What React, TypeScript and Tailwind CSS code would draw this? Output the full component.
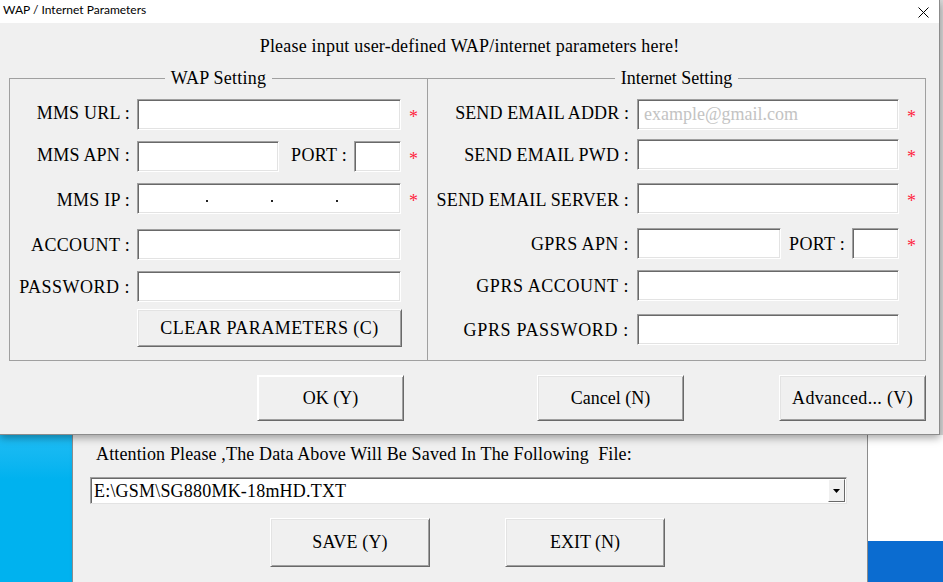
import React from 'react'

const edit =
  'block h-[31px] bg-white border border-t-[#a0a0a0] border-l-[#a0a0a0] border-b-white border-r-white shadow-[inset_1px_1px_0_#696969,inset_-1px_-1px_0_#e3e3e3] outline-none px-[6px] text-[18px] text-black placeholder:text-[#c3c3c3]'

const btn =
  'flex items-center justify-center bg-[#f0f0f0] border border-t-white border-l-white border-b-[#696969] border-r-[#696969] shadow-[inset_1px_1px_0_#e3e3e3,inset_-1px_-1px_0_#a0a0a0] text-[18px] text-black'

function Star(): JSX.Element {
  return (
    <span className="ml-[8px] text-[18px] leading-none text-[#ff1f3d] translate-y-[2px]">
      *
    </span>
  )
}

interface RowProps {
  label: string
  labelWidth: string
  gap: string
  tracking?: string
  // nudges the label text up or down against its input
  shift?: string
  className?: string
  children: React.ReactNode
}

function Row({ label, labelWidth, gap, tracking, shift, className, children }: RowProps): JSX.Element {
  return (
    <div className={`flex items-center h-[31px] ${className ?? ''}`}>
      <span
        className={`${labelWidth} ${tracking ?? ''} ${shift ?? 'mt-[1px]'} text-right text-[18px] leading-[22px] whitespace-nowrap`}
      >
        {label}
      </span>
      <div className={`flex items-center ${gap}`}>{children}</div>
    </div>
  )
}

function PortLabel({ width, shift }: { width: string; shift: string }): JSX.Element {
  return (
    <span className={`${width} ${shift} pr-[7px] text-right text-[18px] leading-[22px] tracking-[0.3px]`}>
      PORT :
    </span>
  )
}

function IpField(): JSX.Element {
  return (
    <div className={`${edit} w-[264px] flex items-start pl-[1px] pt-[16px]`}>
      <span className="ml-[67px] w-[2px] h-[2px] bg-[#222]" />
      <span className="ml-[63px] w-[2px] h-[2px] bg-[#222]" />
      <span className="ml-[63px] w-[2px] h-[2px] bg-[#222]" />
    </div>
  )
}

function WapGroup(): JSX.Element {
  const lw = 'w-[120px]'
  const g = 'ml-[7px]'
  return (
    <fieldset className="w-[419px] min-w-0 border border-[#a0a0a0] pt-[10px] pb-[13px]">
      <legend className="mx-auto px-[6px] text-[18px] leading-[22px] tracking-[0.25px]">
        WAP Setting
      </legend>
      <Row label="MMS URL :" labelWidth={lw} gap={g} tracking="tracking-[0.22px]" shift="mb-[3px]">
        <input className={`${edit} w-[264px]`} readOnly />
        <Star />
      </Row>
      <Row label="MMS APN :" labelWidth={lw} gap={g} tracking="tracking-[0.22px]" shift="mb-[3px]" className="mt-[11px]">
        <input className={`${edit} w-[142px]`} readOnly />
        <PortLabel width="w-[75px]" shift="mb-[3px]" />
        <input className={`${edit} w-[47px]`} readOnly />
        <Star />
      </Row>
      <Row label="MMS IP :" labelWidth={lw} gap={g} tracking="tracking-[0.25px]" shift="mt-[3px]" className="mt-[11px]">
        <IpField />
        <Star />
      </Row>
      <Row label="ACCOUNT :" labelWidth={lw} gap={g} tracking="tracking-[0.3px]" className="mt-[15px]">
        <input className={`${edit} w-[264px]`} readOnly />
      </Row>
      <Row label="PASSWORD :" labelWidth={lw} gap={g} tracking="tracking-[0.5px]" className="mt-[11px]">
        <input className={`${edit} w-[264px]`} readOnly />
      </Row>
      <div className="flex mt-[7px] pl-[127px]">
        <button className={`${btn} w-[265px] h-[38px] tracking-[0.45px]`}>CLEAR PARAMETERS (C)</button>
      </div>
    </fieldset>
  )
}

function InternetGroup(): JSX.Element {
  const lw = 'w-[201px]'
  const g = 'ml-[8px]'
  return (
    <fieldset className="-ml-px w-[499px] min-w-0 border border-[#a0a0a0] pt-[10px] pb-[13px]">
      <legend className="mx-auto px-[6px] text-[18px] leading-[22px]">Internet Setting</legend>
      <Row label="SEND EMAIL ADDR :" labelWidth={lw} gap={g} tracking="tracking-[0.12px]" shift="mb-[3px]">
        <input className={`${edit} w-[262px]`} placeholder="example@gmail.com" readOnly />
        <Star />
      </Row>
      <Row label="SEND EMAIL PWD :" labelWidth={lw} gap={g} tracking="tracking-[0.19px]" className="mt-[9px]">
        <input className={`${edit} w-[262px]`} readOnly />
        <Star />
      </Row>
      <Row label="SEND EMAIL SERVER :" labelWidth={lw} gap={g} tracking="tracking-[0.16px]" shift="mt-[3px]" className="mt-[13px]">
        <input className={`${edit} w-[262px]`} readOnly />
        <Star />
      </Row>
      <Row label="GPRS APN :" labelWidth={lw} gap={g} tracking="tracking-[0.4px]" className="mt-[14px]">
        <input className={`${edit} w-[144px]`} readOnly />
        <PortLabel width="w-[71px]" shift="mt-[1px]" />
        <input className={`${edit} w-[47px]`} readOnly />
        <Star />
      </Row>
      <Row label="GPRS ACCOUNT :" labelWidth={lw} gap={g} tracking="tracking-[0.57px]" className="mt-[11px]">
        <input className={`${edit} w-[262px]`} readOnly />
      </Row>
      <Row label="GPRS PASSWORD :" labelWidth={lw} gap={g} tracking="tracking-[0.67px]" className="mt-[13px]">
        <input className={`${edit} w-[262px]`} readOnly />
      </Row>
    </fieldset>
  )
}

function Dialog(): JSX.Element {
  return (
    <div className="relative z-10 w-[940px] h-[435px] flex flex-col border-r border-b border-[#8c8c8c] bg-[#f0f0f0] shadow-[0_3px_8px_rgba(0,0,0,0.35)]">
      <div className="h-[23px] bg-white flex items-center justify-between pl-[3px] pr-[10px]">
        <span className="mb-[3px] font-['Lato',sans-serif] text-[12px] leading-none">
          WAP / Internet Parameters
        </span>
        <svg width="11" height="11" viewBox="0 0 11 11" className="mt-[1px]">
          <path d="M0.5 0.5L10.5 10.5M10.5 0.5L0.5 10.5" stroke="#000" strokeWidth="1" />
        </svg>
      </div>
      <div className="mt-[12px] h-[22px] leading-[22px] text-center text-[18px] tracking-[0.2px]">
        Please input user-defined WAP/internet parameters here!
      </div>
      <div className="mt-[10px] pl-[9px] flex items-stretch">
        <WapGroup />
        <InternetGroup />
      </div>
      <div className="mt-[14px] flex">
        <button className={`${btn} ml-[257px] w-[147px] h-[46px] border-[#646464] shadow-[inset_1px_1px_0_#fff,inset_-1px_-1px_0_#a0a0a0]`}>
          OK (Y)
        </button>
        <button className={`${btn} ml-[133px] w-[147px] h-[46px]`}>Cancel (N)</button>
        <button className={`${btn} ml-[95px] w-[147px] h-[46px] tracking-[0.33px]`}>Advanced... (V)</button>
      </div>
    </div>
  )
}

function SaveWindow(): JSX.Element {
  return (
    <div className="w-[796px] bg-[#f0f0f0] border-l border-r border-[#8c8c8c] flex flex-col shadow-[3px_0_6px_rgba(0,0,0,0.18)]">
      <div className="mt-[8px] pl-[23px] text-[18px] leading-[22px] whitespace-pre tracking-[0.14px]">
        Attention Please ,The Data Above Will Be Saved In The Following  File:
      </div>
      <div className="mt-[12px] ml-[17px] w-[757px] h-[27px] flex items-center bg-white border border-t-[#a0a0a0] border-l-[#a0a0a0] border-b-[#e3e3e3] border-r-[#e3e3e3] shadow-[inset_1px_1px_0_#696969]">
        <span className="flex-1 pl-[3px] text-[18px] leading-[22px] tracking-[0.2px]">
          E:\GSM\SG880MK-18mHD.TXT
        </span>
        <div className="mr-[1px] w-[17px] h-[23px] flex items-center justify-center bg-[#f0f0f0] border border-t-white border-l-white border-b-[#696969] border-r-[#696969]">
          <svg width="7" height="4" viewBox="0 0 7 4">
            <path d="M0 0H7L3.5 4Z" fill="#000" />
          </svg>
        </div>
      </div>
      <div className="mt-[14px] flex">
        <button className={`${btn} ml-[197px] w-[160px] h-[49px] tracking-[0.15px]`}>SAVE (Y)</button>
        <button className={`${btn} ml-[75px] w-[160px] h-[49px]`}>EXIT (N)</button>
      </div>
    </div>
  )
}

export default function App(): JSX.Element {
  return (
    <div className="relative w-[943px] h-[582px] overflow-hidden flex flex-col font-['Liberation_Serif',serif] text-black">
      <div className="flex h-[435px]">
        <Dialog />
        <div className="flex-1 bg-[#d9d9d9]" />
      </div>
      <div className="flex flex-1">
        <div className="w-[72px] bg-gradient-to-b from-[#1dbcf4] to-[#00b2ef] to-[30%]" />
        <SaveWindow />
        <div className="flex-1 flex flex-col">
          <div className="h-[106px] bg-white" />
          <div className="flex-1 bg-[#0b6cd0]" />
        </div>
      </div>
    </div>
  )
}
